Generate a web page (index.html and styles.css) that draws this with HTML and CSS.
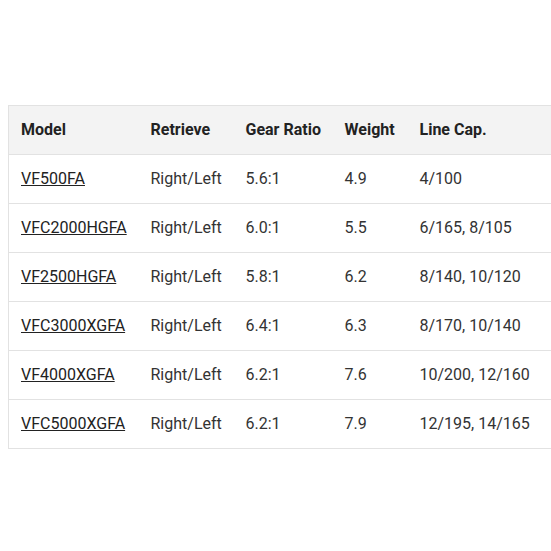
FILE: index.html
```html
<!DOCTYPE html>
<html>
<head>
<meta charset="utf-8">
<link rel="stylesheet" href="styles.css">
</head>
<body>
<div class="wrap">
<table class="specs">
<colgroup>
<col class="c1"><col class="c2"><col class="c3"><col class="c4"><col class="c5">
</colgroup>
<thead>
<tr><th>Model</th><th>Retrieve</th><th>Gear Ratio</th><th>Weight</th><th>Line Cap.</th></tr>
</thead>
<tbody>
<tr><td><a href="#">VF500FA</a></td><td>Right/Left</td><td>5.6:1</td><td>4.9</td><td>4/100</td></tr>
<tr><td><a href="#">VFC2000HGFA</a></td><td>Right/Left</td><td>6.0:1</td><td>5.5</td><td>6/165, 8/105</td></tr>
<tr><td><a href="#">VF2500HGFA</a></td><td>Right/Left</td><td>5.8:1</td><td>6.2</td><td>8/140, 10/120</td></tr>
<tr><td><a href="#">VFC3000XGFA</a></td><td>Right/Left</td><td>6.4:1</td><td>6.3</td><td>8/170, 10/140</td></tr>
<tr><td><a href="#">VF4000XGFA</a></td><td>Right/Left</td><td>6.2:1</td><td>7.6</td><td>10/200, 12/160</td></tr>
<tr><td><a href="#">VFC5000XGFA</a></td><td>Right/Left</td><td>6.2:1</td><td>7.9</td><td>12/195, 14/165</td></tr>
</tbody>
</table>
</div>
</body>
</html>
```
FILE: styles.css
```css
html, body { margin: 0; padding: 0; background: #fff; }
body { margin: 0 0 0 8px; font-family: Roboto, "Liberation Sans", Arial, sans-serif; }
.wrap { padding-top: 105px; width: 543px; overflow: hidden; }
.specs { border-collapse: collapse; table-layout: fixed; width: 640px; border: 1px solid #e2e2e2; font-size: 16px; line-height: 18px; color: #333; }
.c1 { width: 130px; }
.c2 { width: 95px; }
.c3 { width: 99px; }
.c4 { width: 75px; }
.c5 { width: 241px; }
.specs th, .specs td { text-align: left; padding: 15px 12px; border-bottom: 1px solid #e2e2e2; white-space: nowrap; }
.specs th { background: #f3f3f3; font-weight: 700; color: #222; }
.specs a { color: #222; text-decoration: underline; }
```
